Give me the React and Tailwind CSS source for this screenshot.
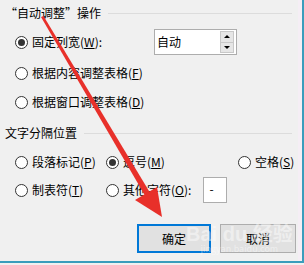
import React from "react";

function Radio({ checked }) {
  return (
    <span className="flex h-[13px] w-[13px] shrink-0 items-center justify-center rounded-full border border-[#333] bg-white">
      {checked && <span className="h-[7px] w-[7px] rounded-full bg-[#333]" />}
    </span>
  );
}

function Option({ checked, label, hotkey, tail = "", className = "" }) {
  return (
    <div className={`flex items-center gap-[4px] ${className}`}>
      <Radio checked={checked} />
      <span className="whitespace-nowrap">
        {label}(<span className="underline">{hotkey}</span>){tail}
      </span>
    </div>
  );
}

function Legend({ text }) {
  return (
    <div className="flex items-center pl-[5px] pr-[6px]">
      <span className="whitespace-nowrap">{text}</span>
      <div className="ml-[7px] h-px flex-1 bg-[#dcdcdc]" />
    </div>
  );
}

export default function App() {
  return (
    <div
      className="relative h-[265px] w-[304px] overflow-hidden bg-[#f0f0f0] text-[12px] leading-[14px] text-black"
      style={{ fontFamily: '"Noto Sans CJK SC", "Noto Sans", sans-serif' }}
    >
      <div className="h-[263px] border-b-2 border-r-2 border-[#3a9dbc]">
        <div className="flex h-full flex-col border-r-[4px] border-[#f5eef5] pt-[6px]">
          <Legend text="“自动调整”操作" />

          <div className="mt-[9px] flex h-[26px] items-center pl-[15px] pr-[61px]">
            <Option checked label="固定列宽" hotkey="W" tail=":" />
            <div className="ml-auto flex h-[26px] w-[83px] items-center border border-[#adadad] bg-white pl-[2px] pr-[2px]">
              <span className="flex-1">自动</span>
              <div className="flex h-[22px] w-[14px] flex-col border border-[#c8c8c8]">
                <div className="flex flex-1 items-center justify-center border-b border-[#c8c8c8] bg-[#e6e6e6]">
                  <span className="h-0 w-0 border-x-[3px] border-b-[3px] border-x-transparent border-b-black" />
                </div>
                <div className="flex flex-1 items-center justify-center bg-[#e6e6e6]">
                  <span className="h-0 w-0 border-x-[3px] border-t-[3px] border-x-transparent border-t-black" />
                </div>
              </div>
            </div>
          </div>

          <Option label="根据内容调整表格" hotkey="F" className="mt-[11px] h-[14px] pl-[15px]" />
          <Option label="根据窗口调整表格" hotkey="D" className="mt-[15px] h-[14px] pl-[15px]" />

          <div className="mt-[17px]">
            <Legend text="文字分隔位置" />
          </div>

          <div className="mt-[15px] grid grid-cols-[91px_132px_1fr] pl-[15px]">
            <Option label="段落标记" hotkey="P" className="h-[14px]" />
            <Option checked label="逗号" hotkey="M" className="h-[14px]" />
            <Option label="空格" hotkey="S" className="h-[14px]" />
          </div>

          <div className="mt-[8px] grid h-[26px] grid-cols-[91px_1fr] items-center pl-[15px]">
            <Option label="制表符" hotkey="T" />
            <div className="flex items-center">
              <Option label="其他字符" hotkey="O" tail=":" />
              <div className="ml-[12px] flex h-[26px] w-[24px] items-start border border-[#adadad] bg-white pl-[5px] pt-[4px]">
                -
              </div>
            </div>
          </div>

          <div className="mt-[21px] flex gap-[9px] pl-[137px]">
            <button className="flex h-[29px] w-[74px] items-center justify-center border-2 border-[#0078d7] bg-[#e1e1e1]">
              确定
            </button>
            <button className="flex h-[29px] w-[76px] items-center justify-center border border-[#adadad] bg-[#e1e1e1]">
              取消
            </button>
          </div>
        </div>
      </div>

      <div className="pointer-events-none absolute left-[186px] top-[224px] flex flex-col items-center whitespace-nowrap text-white/45">
        <span className="text-[20px] font-bold leading-[20px]" style={{ fontFamily: '"Liberation Sans", "Noto Sans CJK SC", sans-serif' }}>
          Bai du 经验
        </span>
        <span className="text-[9px] leading-[10px]">jingyan.baidu.com</span>
      </div>

      <svg className="pointer-events-none absolute left-0 top-0" width="304" height="265" viewBox="0 0 304 265">
        <polygon points="41,17 43.5,16 152,196 147,199" fill="#e8302a" />
        <polygon points="162,217 135,200 157,187" fill="#e8302a" />
      </svg>
    </div>
  );
}
